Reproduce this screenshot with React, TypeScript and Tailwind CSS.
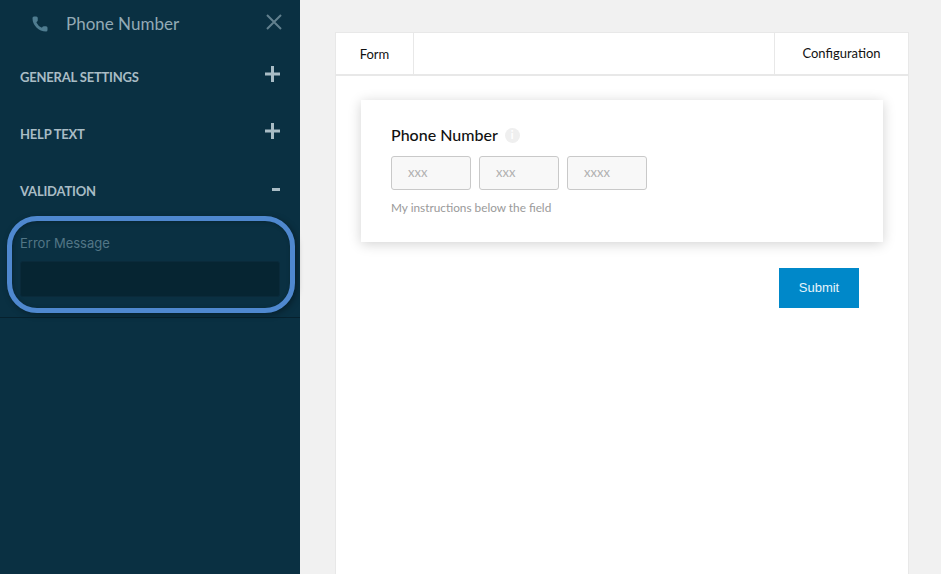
import { Phone } from "lucide-react";

function SectionRow({ title, sign }: { title: string; sign: string }) {
    return (
        <div className="flex h-[57px] items-center justify-between pl-5 pr-5">
            <p className="pt-px text-[13px] font-bold tracking-[-0.2px] text-[#a9bcc5]">{title}</p>
            {sign === "+" ? (
                <svg className="mb-2 h-4 w-[15px] text-[#a9bcc5]" viewBox="0 0 15 16">
                    <path d="M6 0h3v6.500h6v3H9V16H6V9.500H0v-3h6z" fill="currentColor" />
                </svg>
            ) : (
                <div className="mb-1 h-[3px] w-2 bg-[#a9bcc5]" />
            )}
        </div>
    );
}

function DigitBox({ hint }: { hint: string }) {
    return (
        <div className="flex h-[34px] w-20 items-center rounded-[3px] border border-[#c9c9c9] bg-[#f8f8f8] pl-[16px] text-[13px] text-[#b0b0b0]">
            {hint}
        </div>
    );
}

export default function App() {
    return (
        <div className="flex h-[574px] w-[941px] overflow-hidden bg-[#f1f1f1] font-['Lato',sans-serif]">
            <aside className="relative w-[300px] shrink-0 bg-[#0a3042]">
                <div className="flex h-[49px] items-center pl-[31px] pr-[18px]">
                    <Phone className="mb-px h-[18px] w-[18px] text-[#4f7c90]" fill="currentColor" strokeWidth={0} />
                    <p className="mb-px ml-[17px] text-[17px] text-[#93aab5]">Phone Number</p>
                    <svg className="mb-[5px] ml-auto h-4 w-4 text-[#62808e]" viewBox="0 0 16 16">
                        <path d="M1 1l14 14M15 1L1 15" fill="none" stroke="currentColor" strokeWidth="2" />
                    </svg>
                </div>
                <SectionRow title="GENERAL SETTINGS" sign="+" />
                <SectionRow title="HELP TEXT" sign="+" />
                <SectionRow title="VALIDATION" sign="-" />
                <div className="border-b border-[#06212e] px-5 pb-5 pt-[13px]">
                    <p className="font-['Inter',sans-serif] text-[13px] leading-5 text-[#527686]">Error Message</p>
                    <div className="mt-2 h-9 rounded-[3px] border border-[#0a2a3a] bg-[#062532]" />
                </div>
                <div className="absolute left-[7px] top-[216px] h-[97px] w-[288px] rounded-[30px] border-[5px] border-[#4f88cf] shadow-[2px_2px_6px_rgba(0,0,0,0.35),inset_1px_1px_4px_rgba(0,0,0,0.25)]" />
            </aside>
            <main className="flex-1 pl-[35px] pr-[32px] pt-8">
                <div className="h-[600px] border border-[#e8e8e8] bg-white">
                    <div className="flex h-[43px] border-b-2 border-[#e8e8e8]">
                        <div className="flex w-[78px] items-center justify-center border-r border-[#e8e8e8] pt-[2px] text-[13px] text-[#111]">Form</div>
                        <div className="ml-auto flex w-[134px] items-center justify-center border-l border-[#e8e8e8] pt-px text-[13px] text-[#111]">Configuration</div>
                    </div>
                    <div className="mx-[25px] mt-[24px] h-[142px] bg-white pl-[30px] pt-[25px] shadow-[0_2px_12px_rgba(0,0,0,0.18)]">
                        <div className="flex items-center gap-[7px]">
                            <p className="text-[16px] font-medium leading-5 text-[#111]">Phone Number</p>
                            <span className="flex h-[15px] w-[15px] items-center justify-center rounded-full bg-[#efefef] text-[11px] font-bold text-white">i</span>
                        </div>
                        <div className="mt-[11px] flex gap-2">
                            <DigitBox hint="xxx" />
                            <DigitBox hint="xxx" />
                            <DigitBox hint="xxxx" />
                        </div>
                        <p className="mt-[9px] text-[11.8px] text-[#9a9a9a]">My instructions below the field</p>
                    </div>
                    <div className="mt-[26px] flex justify-end pr-[49px]">
                        <button className="h-10 w-20 bg-[#0088c9] font-['Liberation_Sans',sans-serif] text-[13px] text-[#e6f4fb]">Submit</button>
                    </div>
                </div>
            </main>
        </div>
    );
}
